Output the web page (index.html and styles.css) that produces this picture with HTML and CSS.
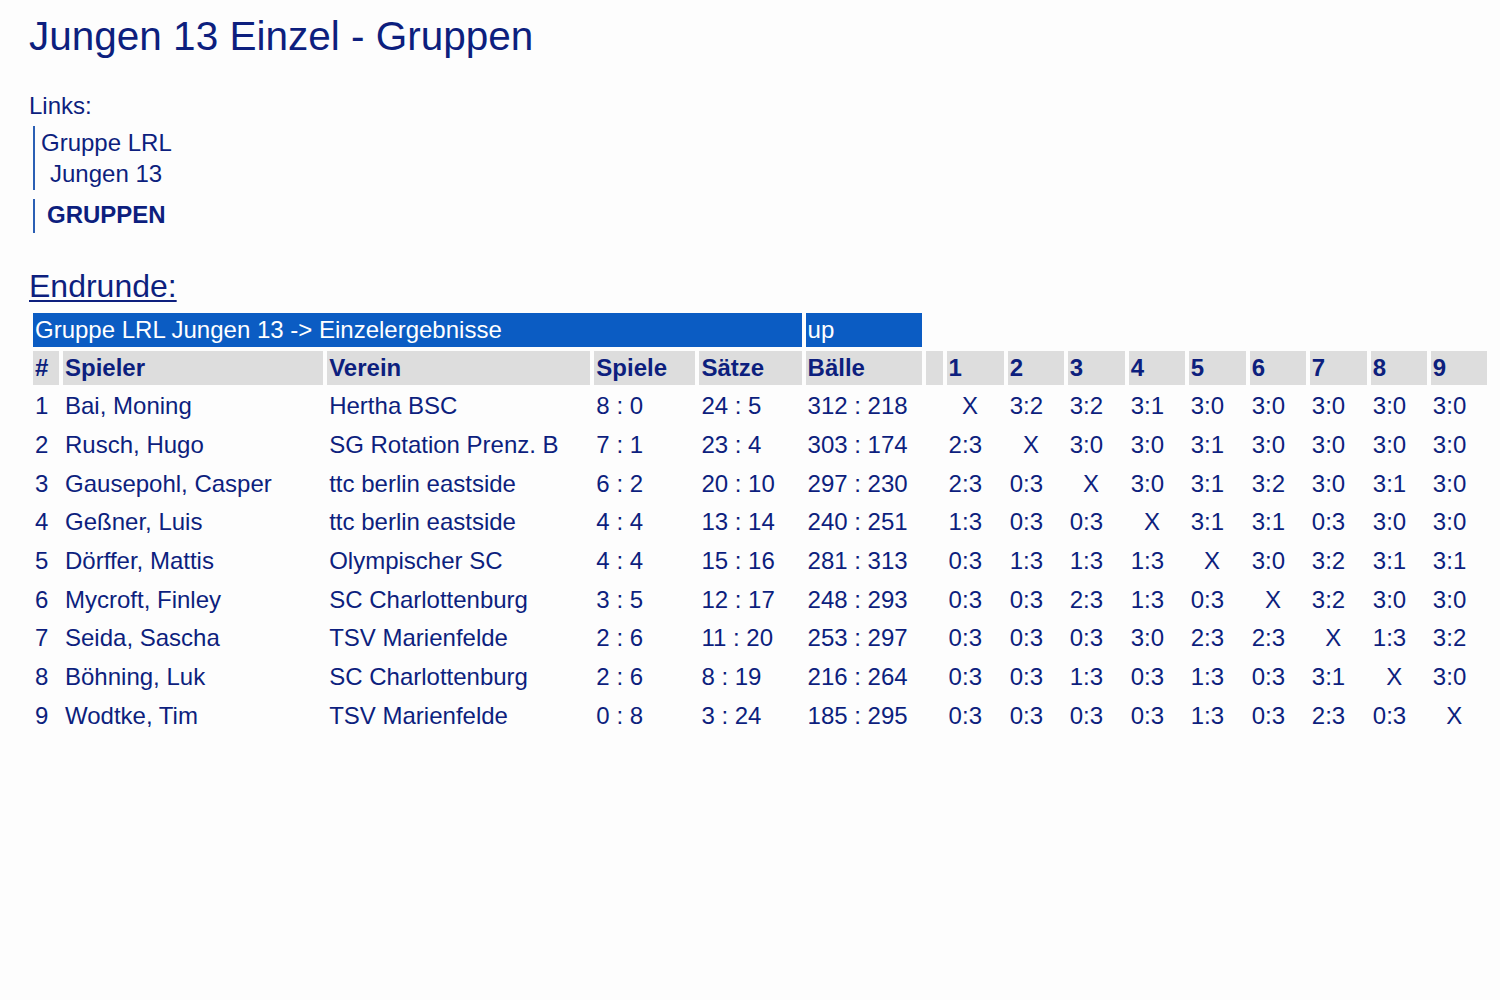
FILE: index.html
```html
<!DOCTYPE html>
<html lang="de">
<head>
<meta charset="utf-8">
<title>Jungen 13 Einzel - Gruppen</title>
<link rel="stylesheet" href="styles.css">
</head>
<body>
<div class="page">
  <h1 class="title">Jungen 13 Einzel - Gruppen</h1>
  <div class="links-label">Links:</div>
  <div class="crumbs">
    <div class="crumb">
      <span class="crumb-line1">Gruppe LRL</span>
      <span class="crumb-line2">Jungen 13</span>
    </div>
    <div class="crumb crumb-current">GRUPPEN</div>
  </div>
  <h2 class="round">Endrunde:</h2>
  <table class="results">
    <colgroup>
      <col class="c-rank"><col class="c-player"><col class="c-club"><col class="c-games"><col class="c-sets"><col class="c-balls"><col class="c-empty">
      <col class="c-a"><col class="c-b"><col class="c-a"><col class="c-b"><col class="c-a"><col class="c-b"><col class="c-a"><col class="c-b"><col class="c-b">
    </colgroup>
    <thead>
      <tr class="blue-row">
        <td colspan="5" class="blue">Gruppe LRL Jungen 13 -&gt; Einzelergebnisse</td>
        <td class="blue">up</td>
        <td colspan="10" class="none"></td>
      </tr>
      <tr class="head-row">
        <th>#</th><th>Spieler</th><th>Verein</th><th>Spiele</th><th>Sätze</th><th>Bälle</th><th></th>
        <th>1</th><th>2</th><th>3</th><th>4</th><th>5</th><th>6</th><th>7</th><th>8</th><th>9</th>
      </tr>
    </thead>
    <tbody>
      <tr><td>1</td><td>Bai, Moning</td><td>Hertha BSC</td><td>8 : 0</td><td>24 : 5</td><td>312 : 218</td><td></td><td>&nbsp;&nbsp;X</td><td>3:2</td><td>3:2</td><td>3:1</td><td>3:0</td><td>3:0</td><td>3:0</td><td>3:0</td><td>3:0</td></tr>
      <tr><td>2</td><td>Rusch, Hugo</td><td>SG Rotation Prenz. B</td><td>7 : 1</td><td>23 : 4</td><td>303 : 174</td><td></td><td>2:3</td><td>&nbsp;&nbsp;X</td><td>3:0</td><td>3:0</td><td>3:1</td><td>3:0</td><td>3:0</td><td>3:0</td><td>3:0</td></tr>
      <tr><td>3</td><td>Gausepohl, Casper</td><td>ttc berlin eastside</td><td>6 : 2</td><td>20 : 10</td><td>297 : 230</td><td></td><td>2:3</td><td>0:3</td><td>&nbsp;&nbsp;X</td><td>3:0</td><td>3:1</td><td>3:2</td><td>3:0</td><td>3:1</td><td>3:0</td></tr>
      <tr><td>4</td><td>Geßner, Luis</td><td>ttc berlin eastside</td><td>4 : 4</td><td>13 : 14</td><td>240 : 251</td><td></td><td>1:3</td><td>0:3</td><td>0:3</td><td>&nbsp;&nbsp;X</td><td>3:1</td><td>3:1</td><td>0:3</td><td>3:0</td><td>3:0</td></tr>
      <tr><td>5</td><td>Dörffer, Mattis</td><td>Olympischer SC</td><td>4 : 4</td><td>15 : 16</td><td>281 : 313</td><td></td><td>0:3</td><td>1:3</td><td>1:3</td><td>1:3</td><td>&nbsp;&nbsp;X</td><td>3:0</td><td>3:2</td><td>3:1</td><td>3:1</td></tr>
      <tr><td>6</td><td>Mycroft, Finley</td><td>SC Charlottenburg</td><td>3 : 5</td><td>12 : 17</td><td>248 : 293</td><td></td><td>0:3</td><td>0:3</td><td>2:3</td><td>1:3</td><td>0:3</td><td>&nbsp;&nbsp;X</td><td>3:2</td><td>3:0</td><td>3:0</td></tr>
      <tr><td>7</td><td>Seida, Sascha</td><td>TSV Marienfelde</td><td>2 : 6</td><td>11 : 20</td><td>253 : 297</td><td></td><td>0:3</td><td>0:3</td><td>0:3</td><td>3:0</td><td>2:3</td><td>2:3</td><td>&nbsp;&nbsp;X</td><td>1:3</td><td>3:2</td></tr>
      <tr><td>8</td><td>Böhning, Luk</td><td>SC Charlottenburg</td><td>2 : 6</td><td>8 : 19</td><td>216 : 264</td><td></td><td>0:3</td><td>0:3</td><td>1:3</td><td>0:3</td><td>1:3</td><td>0:3</td><td>3:1</td><td>&nbsp;&nbsp;X</td><td>3:0</td></tr>
      <tr><td>9</td><td>Wodtke, Tim</td><td>TSV Marienfelde</td><td>0 : 8</td><td>3 : 24</td><td>185 : 295</td><td></td><td>0:3</td><td>0:3</td><td>0:3</td><td>0:3</td><td>1:3</td><td>0:3</td><td>2:3</td><td>0:3</td><td>&nbsp;&nbsp;X</td></tr>
    </tbody>
  </table>
</div>
</body>
</html>
```

FILE: styles.css
```css
html, body {
  margin: 0;
  padding: 0;
  background: #fdfdfd;
}

body {
  font-family: "Liberation Sans", Arial, sans-serif;
  color: #0d1f7e;
}

.page {
  padding: 13px 0 0 29px;
}

.title {
  margin: 0;
  font-size: 40.5px;
  font-weight: normal;
  line-height: 46px;
}

.links-label {
  margin-top: 31px;
  font-size: 24px;
  line-height: 31px;
}

.crumbs {
  margin-top: 5px;
  margin-left: 4px;
  font-size: 24px;
  line-height: 31px;
}

.crumb {
  border-left: 2px solid #2b5fb4;
  padding: 1px 0 1px 6px;
}

.crumb-line1,
.crumb-line2 {
  display: block;
}

.crumb-line2 {
  padding-left: 9px;
}

.crumb-current {
  margin-top: 9px;
  padding: 0 0 3px 12px;
  font-weight: bold;
}

.round {
  margin: 35px 0 0 0;
  font-size: 32px;
  font-weight: normal;
  line-height: 37px;
  text-decoration: underline;
  text-decoration-thickness: 2px;
  text-underline-offset: 3px;
}

.results {
  margin: 4px 0 0 0;
  border-collapse: separate;
  border-spacing: 4px;
  table-layout: fixed;
  width: 1462px;
  font-size: 24px;
  line-height: 28px;
}

.c-rank { width: 26px; }
.c-player { width: 260px; }
.c-club { width: 263px; }
.c-games { width: 101px; }
.c-sets { width: 102px; }
.c-balls { width: 116px; }
.c-empty { width: 17px; }
.c-a { width: 57px; }
.c-b { width: 56px; }

.results td,
.results th {
  padding: 3px 2px;
  text-align: left;
  vertical-align: middle;
  white-space: nowrap;
  overflow: hidden;
}

.results tbody td {
  padding-top: 3.33px;
  padding-bottom: 3.33px;
}

.blue-row .blue {
  background: #0b5cc3;
  color: #ffffff;
}

.blue-row .none {
  background: transparent;
}

.head-row th {
  background: #dddddd;
  font-weight: bold;
}
```
